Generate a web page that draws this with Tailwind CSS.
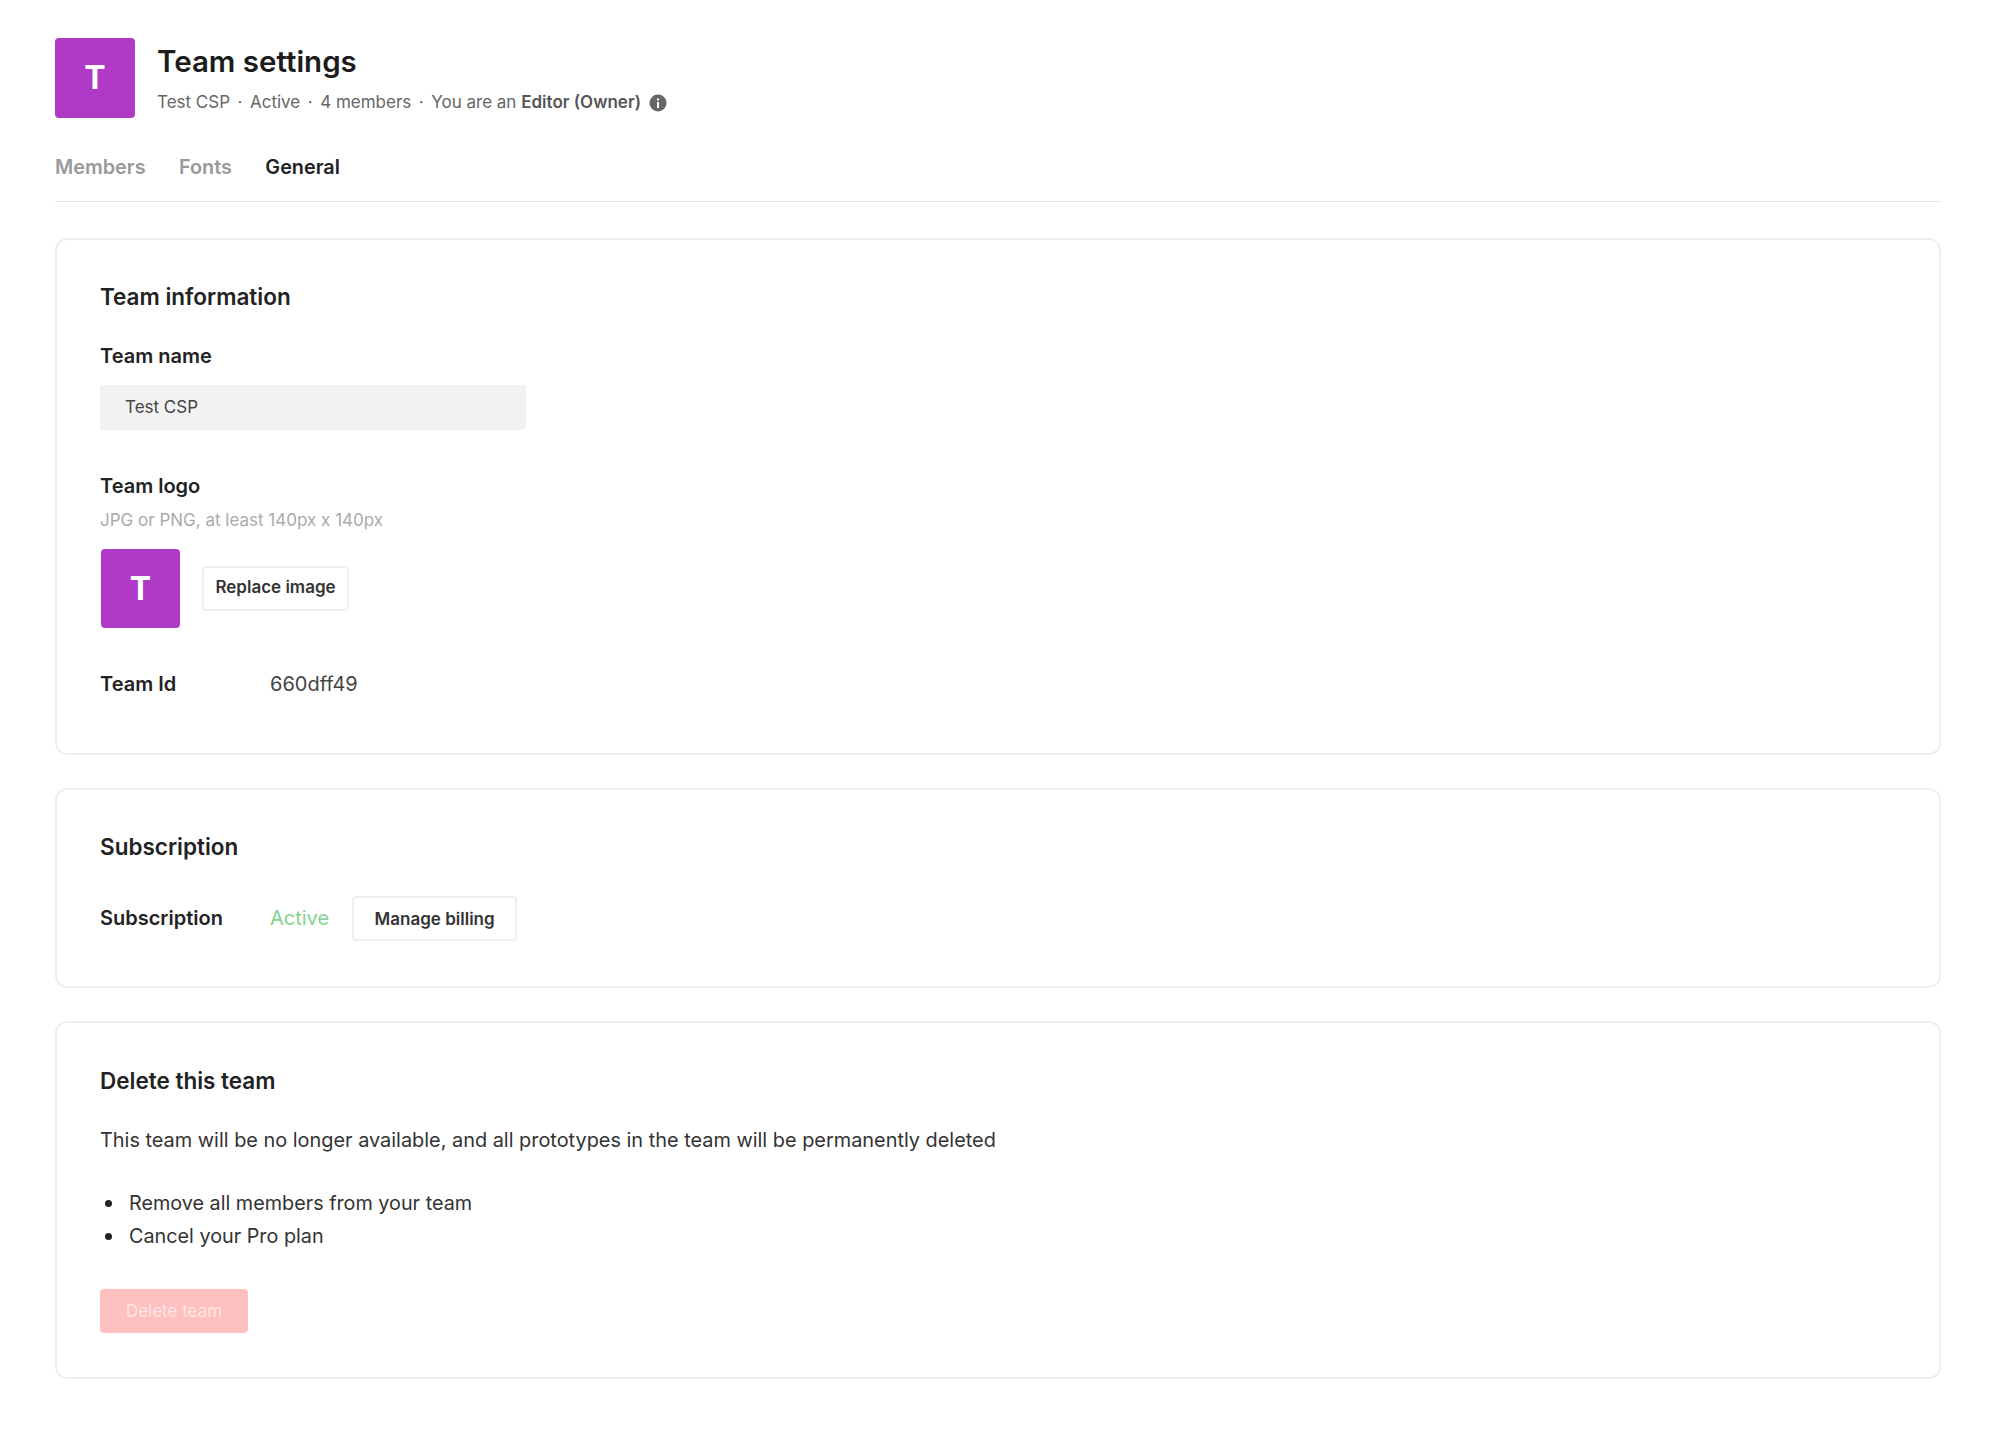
<html>
  <head>
    <meta charset="utf-8" />
    <title>Team settings</title>
    <script src="https://cdn.jsdelivr.net/npm/@tailwindcss/browser@4"></script>
  </head>
  <body class="bg-white font-['Inter',sans-serif] text-[#222222]">
    <div class="flex flex-col pl-[55px] pr-[54px] pt-[38px] w-[1995px]">
      <!-- header -->
      <div class="flex items-start gap-[22px]">
        <div class="w-[80px] h-[80px] rounded-[4px] bg-[#ae3ac6] flex items-center justify-center text-white text-[32px] font-bold">T</div>
        <div class="flex flex-col pt-[4px]">
          <h1 class="text-[29.5px] leading-[38px] font-semibold text-[#1c1c1c]">Team settings</h1>
          <div class="flex items-center mt-[12px] text-[17px] leading-[20px] text-[#666666]">
            <span>Test CSP</span>
            <span class="mx-[7.5px]">·</span>
            <span>Active</span>
            <span class="mx-[7.5px]">·</span>
            <span>4 members</span>
            <span class="mx-[7.5px]">·</span>
            <span>You are an <span class="font-semibold text-[#555555]">Editor (Owner)</span></span>
            <svg class="ml-[8px] mt-[2px]" width="18" height="18" viewBox="0 0 18 18">
              <circle cx="9" cy="9" r="8.5" fill="#666666" />
              <rect x="8" y="8" width="2" height="6" fill="#ffffff" />
              <rect x="8" y="4.5" width="2" height="2" fill="#ffffff" />
            </svg>
          </div>
        </div>
      </div>

      <!-- tabs -->
      <div class="flex gap-[33.5px] mt-[37px] pb-[22px] border-b border-[#e6e6e6] text-[19.8px] leading-[24px] font-semibold text-[#999999]">
        <span>Members</span>
        <span>Fonts</span>
        <span class="text-[#222222]">General</span>
      </div>

      <!-- team information -->
      <section class="mt-[36px] h-[517px] border-2 border-[#efefef] rounded-[12px] pl-[43px] pr-[44px] pt-[43px]">
        <h2 class="text-[22.5px] leading-[28px] font-semibold">Team information</h2>
        <div class="mt-[33px] text-[20px] leading-[24px] font-semibold">Team name</div>
        <div class="mt-[17px] w-[426px] h-[45px] pt-[1px] bg-[#f2f2f2] rounded-[2px] flex items-center pl-[25px] text-[17px] text-[#444444]">Test CSP</div>
        <div class="mt-[44px] text-[20px] leading-[24px] font-semibold">Team logo</div>
        <div class="mt-[12px] text-[17px] leading-[20px] text-[#aaaaaa]">JPG or PNG, at least 140px x 140px</div>
        <div class="flex items-center gap-[22px] mt-[19px] pl-[1px]">
          <div class="w-[79px] h-[79px] rounded-[4px] bg-[#ae3ac6] flex items-center justify-center text-white text-[32px] font-bold">T</div>
          <button class="h-[45px] w-[147px] pb-[2px] border-2 border-[#efefef] rounded-[4px] text-[17px] font-semibold text-[#333333]">Replace image</button>
        </div>
        <div class="flex items-center mt-[44px] text-[20px] leading-[24px]">
          <span class="w-[170px] font-semibold">Team Id</span>
          <span class="text-[#444444]">660dff49</span>
        </div>
      </section>

      <!-- subscription -->
      <section class="mt-[33px] h-[200px] border-2 border-[#efefef] rounded-[12px] pl-[43px] pr-[44px] pt-[43px]">
        <h2 class="text-[22.5px] leading-[28px] font-semibold">Subscription</h2>
        <div class="flex items-center mt-[35px] text-[20px] leading-[24px]">
          <span class="w-[170px] pb-[2px] font-semibold">Subscription</span>
          <span class="pb-[2px] text-[#84d290]">Active</span>
          <button class="ml-[23px] h-[45px] w-[165px] border-2 border-[#efefef] rounded-[4px] text-[17px] font-semibold text-[#333333]">Manage billing</button>
        </div>
      </section>

      <!-- delete -->
      <section class="mt-[33px] h-[358px] border-2 border-[#efefef] rounded-[12px] pl-[43px] pr-[44px] pt-[44px]">
        <h2 class="text-[22.5px] leading-[28px] font-semibold">Delete this team</h2>
        <p class="mt-[32px] text-[19.9px] leading-[26px] text-[#333333]">This team will be no longer available, and all prototypes in the team will be permanently deleted</p>
        <ul class="mt-[34px] text-[19.8px] leading-[33px] text-[#333333]">
          <li class="flex items-center gap-[17px] pl-[5px]"><span class="w-[7px] h-[7px] rounded-full bg-[#222222]"></span>Remove all members from your team</li>
          <li class="flex items-center gap-[17px] pl-[5px]"><span class="w-[7px] h-[7px] rounded-full bg-[#222222]"></span>Cancel your Pro plan</li>
        </ul>
        <button class="mt-[36px] w-[148px] h-[44px] pt-[2px] rounded-[4px] bg-[#ffc0c0] text-white/60 text-[17px] text-center">Delete team</button>
      </section>
    </div>
  </body>
</html>
